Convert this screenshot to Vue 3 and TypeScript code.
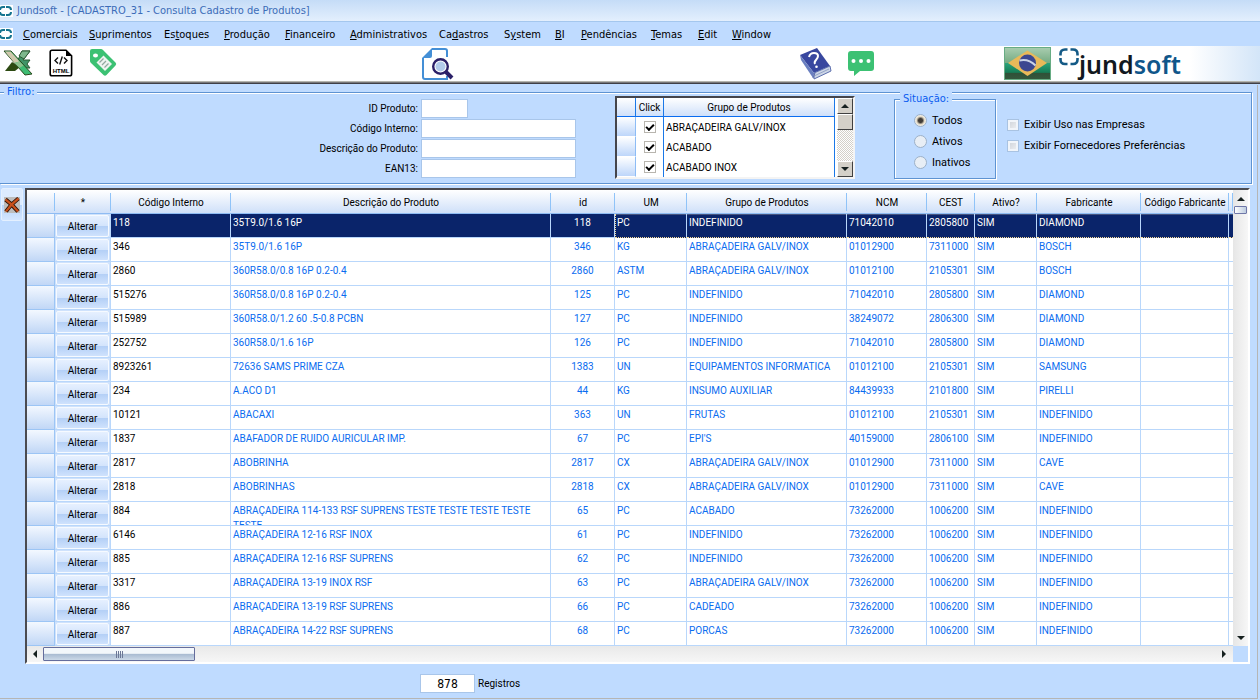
<script setup lang="ts">
import { ref } from 'vue'

interface Product {
  code: string
  description: string
  id: number
  unit: string
  group: string
  ncm: string
  cest: string
  maker: string
}

interface MenuEntry {
  before: string
  key: string
  after: string
}

const menu: MenuEntry[] = [
  { before: '', key: 'C', after: 'omerciais' },
  { before: '', key: 'S', after: 'uprimentos' },
  { before: 'Es', key: 't', after: 'oques' },
  { before: '', key: 'P', after: 'rodução' },
  { before: '', key: 'F', after: 'inanceiro' },
  { before: '', key: 'A', after: 'dministrativos' },
  { before: 'Ca', key: 'd', after: 'astros' },
  { before: 'S', key: 'y', after: 'stem' },
  { before: '', key: 'B', after: 'I' },
  { before: '', key: 'P', after: 'endências' },
  { before: '', key: 'T', after: 'emas' },
  { before: '', key: 'E', after: 'dit' },
  { before: '', key: 'W', after: 'indow' },
]

const products: Product[] = [
  { code: '118', description: '35T9.0/1.6 16P', id: 118, unit: 'PC', group: 'INDEFINIDO', ncm: '71042010', cest: '2805800', maker: 'DIAMOND' },
  { code: '346', description: '35T9.0/1.6 16P', id: 346, unit: 'KG', group: 'ABRAÇADEIRA GALV/INOX', ncm: '01012900', cest: '7311000', maker: 'BOSCH' },
  { code: '2860', description: '360R58.0/0.8 16P 0.2-0.4', id: 2860, unit: 'ASTM', group: 'ABRAÇADEIRA GALV/INOX', ncm: '01012100', cest: '2105301', maker: 'BOSCH' },
  { code: '515276', description: '360R58.0/0.8 16P 0.2-0.4', id: 125, unit: 'PC', group: 'INDEFINIDO', ncm: '71042010', cest: '2805800', maker: 'DIAMOND' },
  { code: '515989', description: '360R58.0/1.2 60 .5-0.8 PCBN', id: 127, unit: 'PC', group: 'INDEFINIDO', ncm: '38249072', cest: '2806300', maker: 'DIAMOND' },
  { code: '252752', description: '360R58.0/1.6 16P', id: 126, unit: 'PC', group: 'INDEFINIDO', ncm: '71042010', cest: '2805800', maker: 'DIAMOND' },
  { code: '8923261', description: '72636 SAMS PRIME CZA', id: 1383, unit: 'UN', group: 'EQUIPAMENTOS INFORMATICA', ncm: '01012100', cest: '2105301', maker: 'SAMSUNG' },
  { code: '234', description: 'A.ACO D1', id: 44, unit: 'KG', group: 'INSUMO AUXILIAR', ncm: '84439933', cest: '2101800', maker: 'PIRELLI' },
  { code: '10121', description: 'ABACAXI', id: 363, unit: 'UN', group: 'FRUTAS', ncm: '01012100', cest: '2105301', maker: 'INDEFINIDO' },
  { code: '1837', description: 'ABAFADOR DE RUIDO AURICULAR IMP.', id: 67, unit: 'PC', group: 'EPI\'S', ncm: '40159000', cest: '2806100', maker: 'INDEFINIDO' },
  { code: '2817', description: 'ABOBRINHA', id: 2817, unit: 'CX', group: 'ABRAÇADEIRA GALV/INOX', ncm: '01012900', cest: '7311000', maker: 'CAVE' },
  { code: '2818', description: 'ABOBRINHAS', id: 2818, unit: 'CX', group: 'ABRAÇADEIRA GALV/INOX', ncm: '01012900', cest: '7311000', maker: 'CAVE' },
  { code: '884', description: 'ABRAÇADEIRA 114-133 RSF SUPRENS TESTE TESTE TESTE TESTE TESTE', id: 65, unit: 'PC', group: 'ACABADO', ncm: '73262000', cest: '1006200', maker: 'INDEFINIDO' },
  { code: '6146', description: 'ABRAÇADEIRA 12-16 RSF INOX', id: 61, unit: 'PC', group: 'INDEFINIDO', ncm: '73262000', cest: '1006200', maker: 'INDEFINIDO' },
  { code: '885', description: 'ABRAÇADEIRA 12-16 RSF SUPRENS', id: 62, unit: 'PC', group: 'INDEFINIDO', ncm: '73262000', cest: '1006200', maker: 'INDEFINIDO' },
  { code: '3317', description: 'ABRAÇADEIRA 13-19 INOX RSF', id: 63, unit: 'PC', group: 'ABRAÇADEIRA GALV/INOX', ncm: '73262000', cest: '1006200', maker: 'INDEFINIDO' },
  { code: '886', description: 'ABRAÇADEIRA 13-19 RSF SUPRENS', id: 66, unit: 'PC', group: 'CADEADO', ncm: '73262000', cest: '1006200', maker: 'INDEFINIDO' },
  { code: '887', description: 'ABRAÇADEIRA 14-22 RSF SUPRENS', id: 68, unit: 'PC', group: 'PORCAS', ncm: '73262000', cest: '1006200', maker: 'INDEFINIDO' },
]

const groups = ref([
  { name: 'ABRAÇADEIRA GALV/INOX', checked: true },
  { name: 'ACABADO', checked: true },
  { name: 'ACABADO INOX', checked: true },
])

const statuses = ['Todos', 'Ativos', 'Inativos']
const status = ref('Todos')
const options = ref([
  { label: 'Exibir Uso nas Empresas', on: false },
  { label: 'Exibir Fornecedores Preferências', on: false },
])
const fields = ref([
  { id: 'f-id', label: 'ID Produto:', value: '', short: true },
  { id: 'f-code', label: 'Código Interno:', value: '', short: false },
  { id: 'f-desc', label: 'Descrição do Produto:', value: '', short: false },
  { id: 'f-ean', label: 'EAN13:', value: '', short: false },
])
const selected = ref(0)
const total = ref('878')
</script>

<template>
  <div class="window">
    <header class="title">
      <svg class="mark" width="13" height="12" viewBox="0 0 13 12" aria-hidden="true">
        <rect width="13" height="12" fill="#fff" />
        <path d="M5 2H3Q0 2 0 5M0 7q0 3 3 3h2M6 2h2q3 0 3 3M11 7q0 3-3 3H6" fill="none" stroke="#14748f" stroke-width="2" />
      </svg>
      <span>Jundsoft - [CADASTRO_31 - Consulta Cadastro de Produtos]</span>
    </header>

    <nav class="menu">
      <svg class="mark" width="13" height="12" viewBox="0 0 13 12" aria-hidden="true">
        <rect width="13" height="12" fill="#fff" />
        <path d="M5 2H3Q0 2 0 5M0 7q0 3 3 3h2M6 2h2q3 0 3 3M11 7q0 3-3 3H6" fill="none" stroke="#14748f" stroke-width="2" />
      </svg>
      <div class="menu-items">
        <button v-for="m in menu" :key="m.before + m.key + m.after" type="button">{{ m.before }}<u>{{ m.key }}</u>{{ m.after }}</button>
      </div>
    </nav>

    <div class="toolbar">
      <div class="tools left">
        <button type="button" aria-label="Excel">
          <svg width="30" height="28" viewBox="0 0 30 28">
            <path d="M19 2h8l-7 9h7l-3 4 3 4h-7l-5-8z" fill="#3f9466" stroke="#2d5a34" stroke-width="1" />
            <path d="M19 2h8l-6 8-5-3z" fill="#7db88c" stroke="#2d5a34" stroke-width="1" />
            <path d="M2 22l7-9 8 5-5 4z" fill="#2d4a12" />
            <path d="M1 2h7l21 23-7 1z" fill="#3dbb72" stroke="#2b4a1e" stroke-width="1" />
            <path d="M2 2.500h5.500l9 10-5 1.500z" fill="#d0c8ac" />
            <path d="M11.500 14l5-1.500 4 4-4 2.500z" fill="#8cbf8c" />
          </svg>
        </button>
        <button type="button" aria-label="HTML">
          <svg width="24" height="28" viewBox="0 0 24 28">
            <path d="M3 1.200h14l5.600 5.600V25q0 1.800-1.800 1.800H3Q1.200 26.800 1.200 25V3Q1.200 1.200 3 1.200z" fill="#fff" stroke="#000" stroke-width="1.600" />
            <path d="M17 1v6h6z" fill="#000" />
            <path d="M9 8.500L6 11.500l3 3M15 8.500l3 3-3 3M13.300 7.500l-2.600 8" fill="none" stroke="#111" stroke-width="1.400" />
            <text x="12" y="23.500" text-anchor="middle" font-family="Liberation Sans" font-weight="700" font-size="6">HTML</text>
          </svg>
        </button>
        <button type="button" aria-label="Etiqueta">
          <svg width="28" height="28" viewBox="0 0 28 28">
            <path d="M1 2Q1 0 3 0h9q1 0 2 1l12.500 12.500q1.500 1.500 0 3l-9 9.500q-1.500 1.500-3 0L2 14q-1-1-1-2z" fill="#3cc173" />
            <ellipse cx="6.500" cy="6.500" rx="2.500" ry="2" fill="#fff" />
            <path d="M14.500 6.500l8.500 8.500-7 7-8.500-8.500z" fill="#eef4f1" />
            <path d="M14.500 9.500l-4 4M17 12l-4 4M19.500 14.500l-4 4" stroke="#92a8a0" stroke-width="1.200" />
          </svg>
        </button>
      </div>
      <button class="search" type="button" aria-label="Pesquisar">
        <svg width="33" height="34" viewBox="0 0 33 34">
          <path d="M11 2h13q2 0 2 2v6M24 32H4q-2 0-2-2V11" fill="none" stroke="#448fd6" stroke-width="2" />
          <path d="M26 29v3h-3" fill="none" stroke="#448fd6" stroke-width="2" />
          <path d="M1 11L11 1v8q0 2-2 2z" fill="#448fd6" />
          <circle cx="19.500" cy="19.500" r="7.300" fill="#fff" stroke="#2b2068" stroke-width="2.400" />
          <circle cx="19.500" cy="19.500" r="5" fill="#b2cbea" />
          <path d="M25 25l6 6" stroke="#2b2068" stroke-width="4" />
        </svg>
      </button>
      <div class="tools right">
        <button type="button" aria-label="Ajuda">
          <svg width="33" height="33" viewBox="0 0 33 33">
            <path d="M1 8L18 1l13 18-16 7z" fill="#38479f" />
            <path d="M1 8l1 5 12 18 1-5z" fill="#6a7fc0" />
            <path d="M15 26l16-7 1 5-17 8z" fill="#ccd6e6" stroke="#5d6fae" stroke-width="1" />
            <path d="M14 31l2-5" stroke="#5d6fae" />
            <path d="M15 29l15-7" stroke="#7b8bb8" stroke-width=".7" />
            <path d="M10 10q1-4 5-4t4 3q0 2-2 4t-1 4" fill="none" stroke="#fff" stroke-width="2" />
            <circle cx="17.500" cy="19.800" r="1.300" fill="#fff" />
          </svg>
        </button>
        <button type="button" aria-label="Mensagens">
          <svg width="27" height="27" viewBox="0 0 27 27">
            <path d="M3 1h20q3 0 3 3v14q0 3-3 3H12l-6 5v-5H3q-3 0-3-3V4q0-3 3-3z" fill="#3cc173" />
            <g fill="#fff"><circle cx="5.500" cy="11" r="2" /><circle cx="13" cy="11" r="2" /><circle cx="20.500" cy="11" r="2" /></g>
          </svg>
        </button>
      </div>
      <div class="brand">
        <svg width="47" height="33" viewBox="0 0 47 33" aria-label="Brasil">
          <defs>
            <linearGradient id="flag" x1="0" y1="0" x2="0" y2="1">
              <stop offset="0" stop-color="#a9cdb0" /><stop offset=".47" stop-color="#77ac83" />
              <stop offset=".48" stop-color="#2aa47c" /><stop offset=".78" stop-color="#167c55" />
              <stop offset=".79" stop-color="#2f5037" /><stop offset="1" stop-color="#35583d" />
            </linearGradient>
          </defs>
          <rect x=".5" y=".5" width="46" height="32" fill="url(#flag)" stroke="#67ac84" />
          <path d="M4 16L23.500 3.500 43 16 23.500 29z" fill="#e9b959" />
          <circle cx="23.500" cy="16" r="8.500" fill="#3c4790" />
          <path d="M15.500 13.500q9-2 16 5" fill="none" stroke="#cbd3e6" stroke-width="2" />
        </svg>
        <svg class="brand-mark" width="20" height="18" viewBox="0 0 20 18" aria-hidden="true">
          <path d="M1.500 7.500V6q0-4.500 4.500-4.500h2.500M11.500 1.500H14q4.500 0 4.500 4.500v1.500M18.500 10v1.500q0 4.500-4.500 4.500h-2.500M8.500 16H6q-4.500 0-4.500-4.500V10" fill="none" stroke="#145a86" stroke-width="2.600" />
        </svg>
        <span class="brand-name">jund<b>soft</b></span>
      </div>
    </div>

    <main>
      <fieldset class="filter">
        <legend>Filtro:</legend>
        <div class="fields">
          <template v-for="f in fields" :key="f.id">
            <label :for="f.id">{{ f.label }}</label>
            <input :id="f.id" v-model="f.value" type="text" :class="{ short: f.short }" />
          </template>
        </div>

        <div class="group-box">
          <table>
            <colgroup><col class="g-ind" /><col class="g-click" /><col /></colgroup>
            <thead><tr><th></th><th>Click</th><th>Grupo de Produtos</th></tr></thead>
            <tbody>
              <tr v-for="g in groups" :key="g.name">
                <td class="ind"></td>
                <td class="tick"><input v-model="g.checked" type="checkbox" :aria-label="g.name" /></td>
                <td>{{ g.name }}</td>
              </tr>
            </tbody>
          </table>
          <div class="classic-scroll">
            <button type="button" aria-label="Subir"><i class="up"></i></button>
            <span class="thumb"></span>
            <button type="button" aria-label="Descer"><i class="down"></i></button>
          </div>
        </div>

        <fieldset class="status">
          <legend>Situação:</legend>
          <label v-for="s in statuses" :key="s"><input v-model="status" type="radio" name="status" :value="s" />{{ s }}</label>
        </fieldset>

        <div class="options">
          <label v-for="o in options" :key="o.label"><input v-model="o.on" type="checkbox" />{{ o.label }}</label>
        </div>
      </fieldset>

      <div class="work">
        <button class="close" type="button" aria-label="Fechar">
          <svg width="16" height="16" viewBox="0 0 16 16">
            <rect width="16" height="16" fill="#bdbdbd" />
            <path d="M1.500 2.500Q8 7 14 14.500M14.500 1.500Q7 7 2 14.500" fill="none" stroke="#2a1208" stroke-width="4" />
            <path d="M1.500 2.500Q8 7 14 14.500M14.500 1.500Q7 7 2 14.500" fill="none" stroke="#c8501c" stroke-width="2.200" />
          </svg>
        </button>

        <section class="grid-box">
          <div class="grid-row">
            <table class="grid">
              <colgroup>
                <col class="c-ind" /><col class="c-act" /><col class="c-code" /><col /><col class="c-id" /><col class="c-um" />
                <col class="c-group" /><col class="c-ncm" /><col class="c-cest" /><col class="c-on" /><col class="c-maker" /><col class="c-mcode" /><col class="c-end" />
              </colgroup>
              <thead>
                <tr>
                  <th></th><th>*</th><th>Código Interno</th><th>Descrição do Produto</th><th>id</th><th>UM</th><th>Grupo de Produtos</th>
                  <th>NCM</th><th>CEST</th><th>Ativo?</th><th>Fabricante</th><th>Código Fabricante</th><th></th>
                </tr>
              </thead>
              <tbody>
                <tr v-for="(p, i) in products" :key="p.id" :class="{ selected: i === selected }" @click="selected = i">
                  <td class="ind"></td>
                  <td class="act"><button type="button">Alterar</button></td>
                  <td class="code">{{ p.code }}</td>
                  <td><div class="clip">{{ p.description }}</div></td>
                  <td class="center">{{ p.id }}</td>
                  <td class="focus first">{{ p.unit }}</td>
                  <td class="focus">{{ p.group }}</td>
                  <td class="focus">{{ p.ncm }}</td>
                  <td class="focus">{{ p.cest }}</td>
                  <td class="focus">SIM</td>
                  <td class="focus">{{ p.maker }}</td>
                  <td class="focus"></td>
                  <td class="focus end"></td>
                </tr>
              </tbody>
            </table>
            <div class="vscroll">
              <i class="up"></i>
              <span class="vthumb"></span>
              <i class="down"></i>
            </div>
          </div>
          <div class="hscroll">
            <div class="htrack">
              <i class="prev"></i>
              <span class="hthumb"><em></em><em></em><em></em><em></em></span>
              <i class="next"></i>
            </div>
          </div>
        </section>
      </div>

      <footer>
        <input id="total" v-model="total" type="text" readonly />
        <label for="total">Registros</label>
      </footer>
    </main>
  </div>
</template>

<style>
html,
body {
  margin: 0;
  background: #bfdbff;
}
</style>

<style scoped>
.window {
  --ui: "DejaVu Sans Condensed", "DejaVu Sans", sans-serif;
  --narrow: Roboto, "Liberation Sans", sans-serif;
  display: flex;
  flex-direction: column;
  min-height: 100vh;
  box-sizing: border-box;
  background: #bfdbff;
  color: #000;
  font: 10px/14px var(--narrow);
  overflow: hidden;
}
button,
input {
  font: inherit;
  color: inherit;
  margin: 0;
}
button {
  padding: 0;
  border: 0;
  background: none;
}
svg {
  display: block;
}
.title {
  display: flex;
  align-items: center;
  gap: 4px;
  height: 21px;
  border-bottom: 1px solid #a4c7ee;
  background: linear-gradient(#c5dcf7, #e3effd);
  color: #3c6cb8;
  font: 11px/14px var(--ui);
}
.menu {
  display: flex;
  align-items: center;
  height: 24px;
  font: 11px/14px var(--ui);
}
.menu-items {
  display: grid;
  grid-template-columns: 66px 75px 60px 61px 65px 89px 65px 51px 26px 70px 47px 34px 50px;
  margin-left: 10px;
  padding-top: 2px;
}
.menu-items button {
  text-align: left;
  white-space: nowrap;
}
.toolbar {
  display: flex;
  height: 35px;
  border-bottom: 1px solid #b5b5ae;
  box-shadow: 0 1px #77777a, 0 2px #3f3f45;
  background: linear-gradient(90deg, transparent calc(100% - 70px), #d3e5f8) #fff;
}
.tools {
  display: flex;
  align-items: flex-start;
}
.left {
  width: 421px;
  padding: 3px 0 0 3px;
  box-sizing: border-box;
  gap: 16px;
}
.search {
  width: 33px;
}
.right {
  padding: 1px 0 0 345px;
  gap: 16px;
}
.right button + button {
  padding-top: 3px;
}
.brand {
  display: flex;
  margin-left: auto;
  width: 256px;
  padding-top: 1px;
}
.brand-mark {
  margin: 1px 0 0 8px;
}
.brand-name {
  font: 600 25px/34px "Noto Sans", sans-serif;
  color: #111820;
}
.brand-name b {
  font-weight: 600;
  color: #10568a;
}
main {
  flex: 1;
  margin: 3px 2px 1px 0;
  border-right: 1px solid #b5b5b5;
  border-bottom: 1px solid #b5b5b5;
}
fieldset {
  min-width: 0;
  margin: 0;
  border: 1px solid #5e93d2;
  box-shadow: inset 1px 1px #fff, 1px 1px #fff;
}
legend {
  padding: 0 3px;
  background: #bfdbff;
  color: #0a5cf0;
  font: 11px/14px var(--ui);
}
.filter {
  display: flex;
  align-items: flex-start;
  height: 99px;
  box-sizing: border-box;
  margin-right: 5px;
  padding: 0;
  border-left: 0;
  box-shadow: inset 0 1px #fff, 1px 1px #fff;
}
.filter > legend {
  margin-left: 4px;
}
.fields {
  display: grid;
  grid-template-columns: 418px 155px;
  gap: 1px 3px;
}
.fields label {
  text-align: right;
  line-height: 19px;
}
.fields input {
  box-sizing: border-box;
  width: 155px;
  height: 19px;
  padding: 0 2px;
  border: 1px solid #a9c6ea;
  background: #fff;
}
.fields .short {
  width: 47px;
}
.group-box {
  display: flex;
  width: 240px;
  height: 83px;
  box-sizing: border-box;
  margin: -3px 0 0 39px;
  border: 2px solid;
  border-color: #45454b #f4f4f4 #f4f4f4 #45454b;
  background: #fff;
}
table {
  border-collapse: separate;
  border-spacing: 0;
  table-layout: fixed;
}
.group-box table {
  width: 218px;
  height: 79px;
}
.g-ind {
  width: 19px;
}
.g-click {
  width: 28px;
}
.group-box th,
.group-box td {
  box-sizing: border-box;
  height: 20px;
  padding: 1px 0 0 2px;
  border-right: 1px solid #1a78e8;
  line-height: 18px;
}
.group-box th {
  height: 19px;
  padding: 1px 0 0;
  border-bottom: 1px solid #0a6cf0;
  background: linear-gradient(#fff, #cfe0fa);
  font-weight: 400;
  line-height: 17px;
}
.group-box .ind {
  border-right-color: #8dbcf5;
  border-bottom: 1px solid #fff;
  background: linear-gradient(#fff, #bdd6fa);
}
.group-box .tick {
  padding: 0;
}
.tick input {
  appearance: none;
  display: grid;
  place-content: center;
  width: 12px;
  height: 12px;
  margin: auto;
  border: 1px solid;
  border-color: #333 #d4d0c8 #d4d0c8 #333;
  outline: 1px solid #b8b5ae;
  outline-offset: -1px;
}
.tick input:checked::before {
  content: "";
  width: 6px;
  height: 3px;
  margin-bottom: 2px;
  border-left: 2px solid #000;
  border-bottom: 2px solid #000;
  transform: rotate(-45deg);
}
.classic-scroll {
  display: flex;
  flex-direction: column;
  width: 16px;
  margin-left: 2px;
  background: repeating-conic-gradient(#d4d0c8 0 25%, #fff 0 50%) 0 0 / 2px 2px;
}
.classic-scroll button,
.classic-scroll .thumb {
  display: grid;
  place-content: center;
  box-sizing: border-box;
  height: 16px;
  border: 1px solid;
  border-color: #fff #404040 #404040 #fff;
  background: #d4d0c8;
}
.classic-scroll button:last-child {
  margin-top: auto;
}
i {
  width: 0;
  height: 0;
  border: 4px solid transparent;
}
.up {
  border-top-width: 0;
  border-bottom-color: #16201f;
}
.down {
  border-bottom-width: 0;
  border-top-color: #16201f;
}
.prev {
  border-left-width: 0;
  border-right-color: #16201f;
}
.next {
  border-right-width: 0;
  border-left-color: #16201f;
}
.status {
  display: flex;
  flex-direction: column;
  width: 102px;
  height: 87px;
  box-sizing: border-box;
  margin: -7px 0 0 39px;
  padding: 4px 0 0 19px;
}
.status legend {
  margin-left: -14px;
}
.status label,
.options label {
  display: flex;
  align-items: center;
  height: 21px;
  font: 11px/14px var(--narrow);
}
.status input {
  appearance: none;
  box-sizing: border-box;
  width: 13px;
  height: 13px;
  margin-right: 5px;
  border: 1px solid #9db1c8;
  border-radius: 50%;
  background: #e8eef5;
}
.status input:checked {
  background: radial-gradient(circle, #403c38 0 2px, #e5dcc8 4px, #f4f7fa 6px);
}
.options {
  margin: 15px 0 0 11px;
}
.options input {
  appearance: none;
  box-sizing: border-box;
  width: 12px;
  height: 12px;
  margin-right: 5px;
  border: 1px solid #a9c3e2;
  outline: 2px solid #f1f5fa;
  outline-offset: -3px;
  background: linear-gradient(135deg, #ccd1d8, #f1f2f4);
}
.work {
  display: flex;
  align-items: flex-start;
  margin: 4px 7px 0 1px;
}
.close {
  display: grid;
  place-content: center;
  box-sizing: border-box;
  width: 22px;
  height: 33px;
  margin-right: 2px;
  border: 1px solid #e4f0ff;
  border-radius: 2px;
  background: linear-gradient(#dcebff 0 50%, #b5d3fa 50%, #d4e6ff);
}
.grid-box {
  flex: 1;
  min-width: 0;
  border: 2px solid;
  border-color: #4b4b50 #fff #fff #4b4b50;
  background: #fff;
}
.grid-row {
  display: flex;
}
.grid {
  flex: 1;
  width: 100%;
}
.c-ind { width: 28px; }
.c-act { width: 56px; }
.c-code { width: 120px; }
.c-id { width: 64px; }
.c-um { width: 72px; }
.c-group { width: 160px; }
.c-ncm { width: 80px; }
.c-cest { width: 48px; }
.c-on { width: 62px; }
.c-maker { width: 104px; }
.c-mcode { width: 88px; }
.c-end { width: 4px; }
.grid th {
  box-sizing: border-box;
  height: 24px;
  padding: 2px 0 0;
  border-bottom: 1px solid #8fbcf3;
  background:
    linear-gradient(#8fc3f8, #8fc3f8) right 3px / 1px 18px no-repeat,
    linear-gradient(#fff, #cfe0f9);
  font-weight: 400;
  white-space: nowrap;
}
.grid td {
  box-sizing: border-box;
  height: 24px;
  padding: 1px 2px 0;
  border-right: 1px solid #b9d7fb;
  border-bottom: 1px solid #b9d7fb;
  color: #0a6cf0;
  vertical-align: top;
  line-height: 15px;
  white-space: nowrap;
}
.grid .code {
  color: #000;
}
.grid .center {
  text-align: center;
}
.clip {
  height: 22px;
  overflow: hidden;
  white-space: normal;
}
.grid .end,
.grid th:last-child {
  border-right: 0;
}
.grid .ind {
  border-right-color: #9cc5f5;
  border-bottom-color: #9cc5f5;
  background: linear-gradient(#f3f8ff, #c1d7f6);
}
.grid .act {
  padding: 1px 1px 0;
  background: #cfe2fc;
}
.act button {
  display: block;
  box-sizing: border-box;
  width: 100%;
  height: 22px;
  padding-top: 1px;
  border: 1px solid #f6faff;
  border-radius: 2px;
  background: linear-gradient(#e6f0ff 0, #d3e4fc 50%, #b3cff6 50%, #cfe2fd);
  color: #000;
  line-height: 19px;
}
.selected td:not(.ind):not(.act) {
  background: #0a246a;
  color: #fff;
}
.selected .focus {
  border-bottom: 1px dotted #f5d995;
  box-shadow: inset 0 1px #46547f;
}
.selected .first {
  border-left: 1px dotted #f5d995;
  padding-left: 1px;
}
.vscroll {
  display: flex;
  flex-direction: column;
  align-items: center;
  width: 15px;
  padding: 7px 0 6px;
  box-sizing: border-box;
  background: linear-gradient(90deg, #e6e6e6, #f7f7f7);
}
.vscroll .down {
  margin-top: auto;
}
.vthumb {
  box-sizing: border-box;
  width: 13px;
  height: 8px;
  margin-top: 5px;
  border: 1px solid #6f77a8;
  border-radius: 1px;
  background: linear-gradient(90deg, #fff, #bdccdf);
}
.hscroll {
  padding-right: 15px;
  background: #bfdbff;
}
.htrack {
  display: flex;
  align-items: center;
  height: 16px;
  padding: 0 7px 0 6px;
  background: linear-gradient(#e9e9e9, #f6f6f6);
}
.htrack .next {
  margin-left: auto;
}
.hthumb {
  display: flex;
  align-items: center;
  justify-content: center;
  gap: 1px;
  box-sizing: border-box;
  width: 152px;
  height: 14px;
  margin-left: 6px;
  border: 1px solid #656d9c;
  border-radius: 1px;
  background: linear-gradient(#f3f7fb 0 45%, #a8bad1 50%, #ccd9e8);
}
.hthumb em {
  width: 1px;
  height: 7px;
  background: #6c7796;
}
footer {
  display: flex;
  align-items: center;
  gap: 3px;
  padding: 10px 0 0 420px;
}
footer input {
  box-sizing: border-box;
  width: 55px;
  height: 19px;
  padding: 0;
  border: 1px solid #a9c6ea;
  background: #fff;
  text-align: center;
  font: 12px/14px var(--ui);
}
</style>
